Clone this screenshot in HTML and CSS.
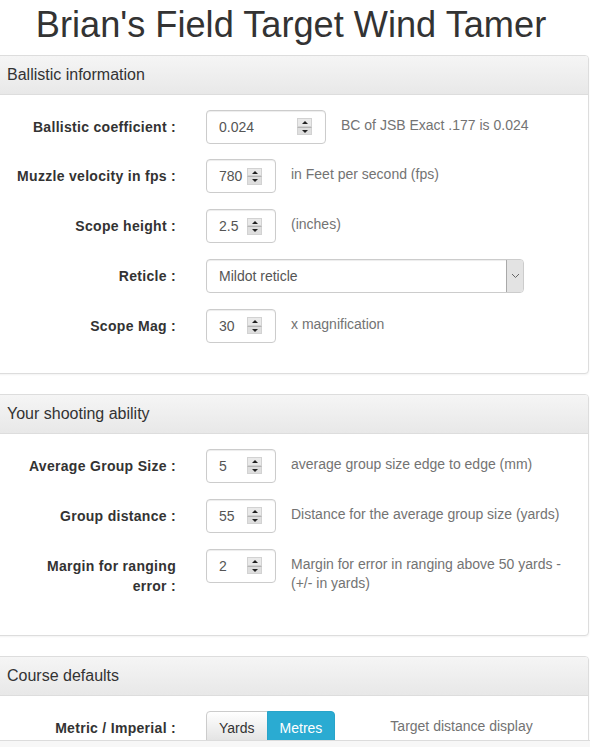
FILE: index.html
```html
<!DOCTYPE html>
<html lang="en">
    <head>
        <meta charset="UTF-8" />
        <meta name="viewport" content="width=device-width, initial-scale=1.0" />
        <title>Wind Tamer</title>
        <link rel="stylesheet" href="styles.css">
    </head>
    <body>
        <h1>Brian's Field Target Wind Tamer</h1>

        <!-- Ballistics -->
        <div class="panel">
            <div class="panel-heading">Ballistic information</div>
            <div class="panel-body">
                <div class="form-row">
                    <label>Ballistic coefficient :</label>
                    <div class="num-box wide">
                        <input type="number" value="0.024">
                        <span class="spin"><i class="up"></i><i class="down"></i></span>
                    </div>
                    <p class="help">BC of JSB Exact .177 is 0.024</p>
                </div>
                <div class="form-row">
                    <label>Muzzle velocity in fps :</label>
                    <div class="num-box">
                        <input type="number" value="780">
                        <span class="spin"><i class="up"></i><i class="down"></i></span>
                    </div>
                    <p class="help">in Feet per second (fps)</p>
                </div>
                <div class="form-row">
                    <label>Scope height :</label>
                    <div class="num-box">
                        <input type="number" value="2.5">
                        <span class="spin"><i class="up"></i><i class="down"></i></span>
                    </div>
                    <p class="help">(inches)</p>
                </div>
                <div class="form-row">
                    <label>Reticle :</label>
                    <div class="select-box">
                        <span class="select-text">Mildot reticle</span>
                        <span class="select-arrow">
                            <svg width="9" height="6" viewBox="0 0 9 6"><path d="M1 1l3.5 3.5L8 1" fill="none" stroke="#666" stroke-width="1"/></svg>
                        </span>
                    </div>
                </div>
                <div class="form-row">
                    <label>Scope Mag :</label>
                    <div class="num-box">
                        <input type="number" value="30">
                        <span class="spin"><i class="up"></i><i class="down"></i></span>
                    </div>
                    <p class="help">x magnification</p>
                </div>
            </div>
        </div>

        <!-- Shooter -->
        <div class="panel">
            <div class="panel-heading">Your shooting ability</div>
            <div class="panel-body">
                <div class="form-row">
                    <label>Average Group Size :</label>
                    <div class="num-box">
                        <input type="number" value="5">
                        <span class="spin"><i class="up"></i><i class="down"></i></span>
                    </div>
                    <p class="help">average group size edge to edge (mm)</p>
                </div>
                <div class="form-row">
                    <label>Group distance :</label>
                    <div class="num-box">
                        <input type="number" value="55">
                        <span class="spin"><i class="up"></i><i class="down"></i></span>
                    </div>
                    <p class="help">Distance for the average group size (yards)</p>
                </div>
                <div class="form-row">
                    <label>Margin for ranging<br>error :</label>
                    <div class="num-box">
                        <input type="number" value="2">
                        <span class="spin"><i class="up"></i><i class="down"></i></span>
                    </div>
                    <p class="help wrap">Margin for error in ranging above 50 yards - (+/- in yards)</p>
                </div>
            </div>
        </div>

        <!-- Course -->
        <div class="panel">
            <div class="panel-heading">Course defaults</div>
            <div class="panel-body">
                <div class="form-row">
                    <label>Metric / Imperial :</label>
                    <div class="btn-group">
                        <button class="btn">Yards</button>
                        <button class="btn active">Metres</button>
                    </div>
                    <p class="help far">Target distance display</p>
                </div>
            </div>
        </div>

        <div class="bottom-strip"></div>
    </body>
</html>
```

FILE: styles.css
```css
body {
    font-family: "Liberation Sans", Arial, sans-serif;
    font-size: 14px;
    line-height: 20px;
    color: #333;
    margin: 0;
    background: #fff;
    overflow: hidden;
}
h1 {
    font-size: 36.2px;
    font-weight: normal;
    line-height: 40px;
    text-align: center;
    margin: 5px 0 10px;
    padding-right: 8px;
    color: #333;
}
.panel {
    margin: 0 1px 20px -9px;
    border: 1px solid #ddd;
    border-radius: 4px;
    box-shadow: 0 1px 2px rgba(0,0,0,0.05);
    background: #fff;
}
.panel-heading {
    padding: 10px 15px;
    font-size: 16px;
    line-height: 17.5px;
    background: linear-gradient(#f5f5f5, #e8e8e8);
    border-bottom: 1px solid #ddd;
    border-radius: 3px 3px 0 0;
}
.panel-body {
    padding: 15px 0;
}
.form-row {
    display: flex;
    align-items: flex-start;
    margin-bottom: 15.8px;
}
.form-row label {
    width: 184px;
    flex: none;
    padding-top: 7px;
    text-align: right;
    font-weight: bold;
    letter-spacing: 0.3px;
    margin-right: 30px;
}
.num-box {
    width: 70px;
    height: 34px;
    box-sizing: border-box;
    display: flex;
    align-items: center;
    border: 1px solid #ccc;
    border-radius: 4px;
    box-shadow: inset 0 1px 1px rgba(0,0,0,0.075);
    padding: 0 13px 0 12px;
    flex: none;
}
.num-box.wide {
    width: 120px;
}
.num-box input {
    flex: 1;
    min-width: 0;
    border: none;
    outline: none;
    padding: 0;
    font-family: "Liberation Sans", Arial, sans-serif;
    font-size: 14px;
    color: #555;
    background: transparent;
    -moz-appearance: textfield;
}
.num-box input::-webkit-inner-spin-button,
.num-box input::-webkit-outer-spin-button {
    -webkit-appearance: none;
    margin: 0;
}
.spin {
    width: 15px;
    height: 17px;
    display: flex;
    flex-direction: column;
    flex: none;
    margin-left: 4px;
}
.spin i {
    flex: 1;
    position: relative;
    background: #e9e9e9;
    border: 1px solid #d2d2d2;
}
.spin i.down {
    border-top: 1px solid #b5b5b5;
    background: #dedede;
}
.spin i::after {
    content: "";
    position: absolute;
    left: 4px;
    top: 2px;
    border-left: 3px solid transparent;
    border-right: 3px solid transparent;
}
.spin i.up::after {
    border-bottom: 3px solid #222;
}
.spin i.down::after {
    top: 2px;
    border-top: 3px solid #222;
}
.help {
    max-width: 282px;
    margin: 5px 0 9px 15px;
    color: #737373;
}
.help.wrap {
    margin-top: 6px;
    line-height: 19.5px;
    margin-bottom: 11px;
}
.help.far {
    margin-left: 55px;
}
.select-box {
    width: 318px;
    height: 34px;
    box-sizing: border-box;
    display: flex;
    border: 1px solid #ccc;
    border-radius: 4px;
    box-shadow: inset 0 1px 1px rgba(0,0,0,0.075);
    overflow: hidden;
}
.select-text {
    flex: 1;
    padding: 6px 12px;
    color: #555;
}
.select-arrow {
    width: 16px;
    display: flex;
    align-items: center;
    justify-content: center;
    background: #e3e3e3;
    border-left: 1px solid #a9a9a9;
}
.btn-group {
    display: flex;
}
.btn {
    font-family: "Liberation Sans", Arial, sans-serif;
    font-size: 14px;
    line-height: 20px;
    padding: 6px 12px;
    border: 1px solid #ccc;
    background: linear-gradient(#fff, #e0e0e0);
    color: #333;
    border-radius: 4px 0 0 4px;
    cursor: pointer;
}
.btn.active {
    background: #2aabd2;
    border-color: #28a4c9;
    color: #fff;
    border-radius: 0 4px 4px 0;
    margin-left: -1px;
}
.bottom-strip {
    position: fixed;
    left: 0;
    right: 0;
    bottom: 0;
    height: 6px;
    background: #f7f7f7;
    border-top: 1px solid #dcdcdc;
}
```
